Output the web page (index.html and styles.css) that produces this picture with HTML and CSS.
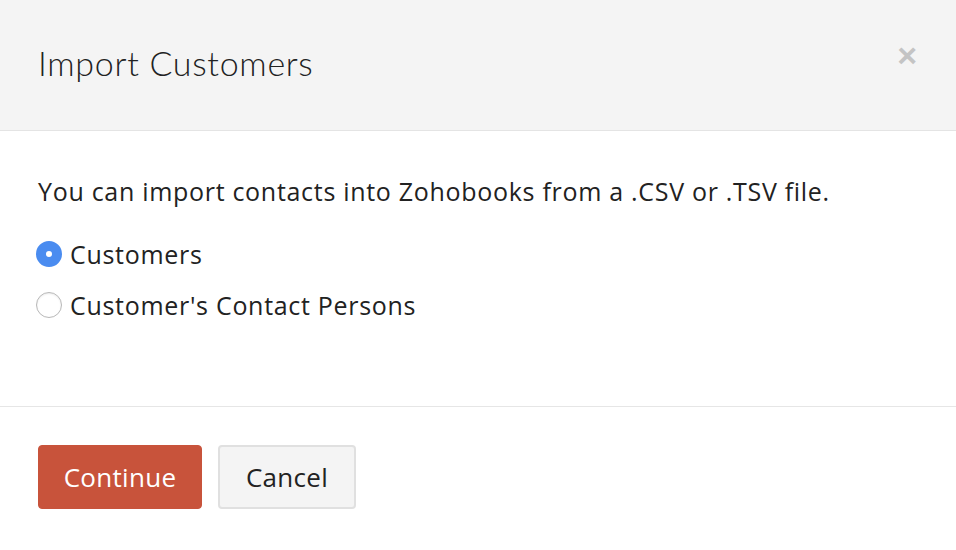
FILE: index.html
```html
<!DOCTYPE html>
<html>
<head>
<meta charset="utf-8">
<link rel="stylesheet" href="styles.css">
</head>
<body>
<div class="modal">
  <div class="modal-header">
    <h1 class="title">Import Customers</h1>
    <span class="close">&times;</span>
  </div>
  <div class="modal-body">
    <p class="intro">You can import contacts into Zohobooks from a .CSV or .TSV file.</p>
    <label class="radio-row"><span class="radio checked"></span><span>Customers</span></label>
    <label class="radio-row"><span class="radio"></span><span>Customer's Contact Persons</span></label>
  </div>
  <div class="modal-footer">
    <button class="btn btn-primary">Continue</button>
    <button class="btn btn-default">Cancel</button>
  </div>
</div>
</body>
</html>
```

FILE: styles.css
```css
html, body {
  margin: 0;
  padding: 0;
  background: #ffffff;
}
.modal {
  width: 956px;
  height: 550px;
  font-family: "Open Sans", Lato, sans-serif;
  color: #222;
}
.modal-header {
  height: 130px;
  background: #f4f4f4;
  border-bottom: 1px solid #e4e4e4;
  display: flex;
  align-items: flex-start;
  justify-content: space-between;
  padding: 0 38px;
}
.title {
  margin: 42px 0 0;
  font-family: Lato, "Open Sans", sans-serif;
  font-weight: 300;
  font-size: 34px;
  line-height: 42px;
  letter-spacing: 0.7px;
  color: #222;
}
.close {
  margin-top: 38px;
  margin-right: 1px;
  font-family: "Liberation Sans", Arial, sans-serif;
  font-size: 34px;
  line-height: 34px;
  font-weight: 700;
  color: #c4c4c4;
}
.modal-body {
  padding: 44px 38px 0;
  height: 231px;
  border-bottom: 1px solid #e6e6e6;
}
.intro {
  margin: 0 0 21px;
  font-size: 25px;
  line-height: 32px;
  letter-spacing: 0.7px;
}
.radio-row {
  display: flex;
  align-items: center;
  gap: 8px;
  font-size: 25px;
  line-height: 32px;
  letter-spacing: 0.7px;
  margin-left: -2px;
  height: 51px;
}
.radio {
  width: 26px;
  height: 26px;
  border-radius: 50%;
  border: 1px solid #b8b8b8;
  background: #fff;
  box-sizing: border-box;
  display: inline-block;
  box-shadow: inset 0 1px 2px rgba(0,0,0,0.08);
}
.radio.checked {
  border: 10px solid #4a8cf0;
  background: #fff;
  box-shadow: none;
}
.modal-footer {
  display: flex;
  gap: 16px;
  padding: 38px 38px 0;
}
.btn {
  height: 64px;
  border-radius: 4px;
  font-family: "Open Sans", Lato, sans-serif;
  font-size: 26px;
  letter-spacing: 0.3px;
  padding: 0;
}
.btn-primary {
  width: 164px;
  background: #c8533b;
  color: #fff;
  border: 1px solid #c8533b;
}
.btn-default {
  width: 138px;
  background: #f4f4f4;
  color: #222;
  border: 2px solid #e0e0e0;
}
```
